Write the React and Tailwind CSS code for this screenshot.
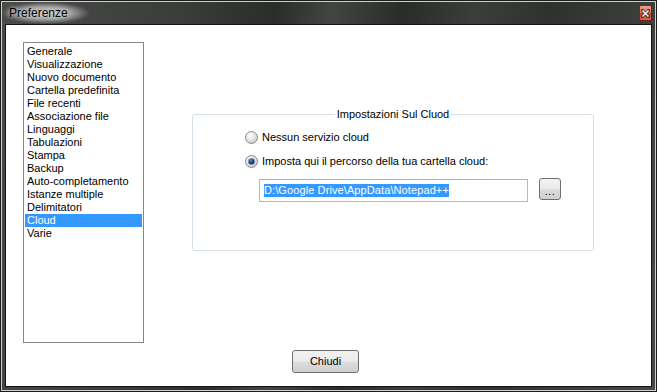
import React from 'react';

const items = [
  'Generale',
  'Visualizzazione',
  'Nuovo documento',
  'Cartella predefinita',
  'File recenti',
  'Associazione file',
  'Linguaggi',
  'Tabulazioni',
  'Stampa',
  'Backup',
  'Auto-completamento',
  'Istanze multiple',
  'Delimitatori',
  'Cloud',
  'Varie',
];

const Radio = ({ checked }) => (
  <svg width="13" height="13" viewBox="0 0 13 13" className="shrink-0">
    <defs>
      <radialGradient id={checked ? 'rgc' : 'rgu'} cx="40%" cy="35%" r="70%">
        <stop offset="0%" stopColor="#ffffff" />
        <stop offset="60%" stopColor="#e2e2e2" />
        <stop offset="100%" stopColor="#c4c4c4" />
      </radialGradient>
      <radialGradient id="dot" cx="40%" cy="35%" r="70%">
        <stop offset="0%" stopColor="#6a8fc0" />
        <stop offset="55%" stopColor="#1d3f6e" />
        <stop offset="100%" stopColor="#0e2344" />
      </radialGradient>
    </defs>
    <circle cx="6.5" cy="6.5" r="6" fill={`url(#${checked ? 'rgc' : 'rgu'})`} stroke="#8a8a8a" />
    {checked && <circle cx="6.5" cy="6.5" r="3.3" fill="url(#dot)" stroke="#9fc0e4" strokeWidth="0.6" />}
  </svg>
);

export default function App() {
  return (
    <div className="w-[657px] h-[392px] border border-[#1c1c1c] bg-[#3d3f3d] font-['Liberation_Sans',Arial,sans-serif] text-[11px] text-black">
      <div className="h-full border border-[#cfcfcf] flex flex-col px-[3px] pb-[3px] bg-[linear-gradient(100deg,#4a4c4a_0%,#3b3d3b_25%,#2b2d2b_38%,#434543_46%,#2a2c2a_56%,#3c3e3c_66%,#2f312f_76%,#474947_100%)]">
        {/* title bar */}
        <div className="h-[22px] flex items-start justify-between">
          <div className="h-full flex items-center -ml-[3px] pl-[7px] pr-[22px] bg-[radial-gradient(closest-side,rgba(205,205,205,0.95)_0%,rgba(185,185,185,0.8)_55%,rgba(150,150,150,0)_100%)]">
            <span className="text-[12px] text-black leading-none [text-shadow:0_0_4px_#e8e8e8]">Preferenze</span>
          </div>
          <div className="mt-[3px] w-[13px] h-[16px] rounded-[2px] border border-[#7a2416] bg-[linear-gradient(180deg,#f0a08c_0%,#e06a50_45%,#c4391f_55%,#d8644a_100%)] flex items-center justify-center">
            <svg width="9" height="9" viewBox="0 0 9 9">
              <path d="M1.5 1.5 L7.5 7.5 M7.5 1.5 L1.5 7.5" stroke="#3a3a3a" strokeWidth="3" strokeLinecap="square" />
              <path d="M1.5 1.5 L7.5 7.5 M7.5 1.5 L1.5 7.5" stroke="#ffffff" strokeWidth="1.4" />
            </svg>
          </div>
        </div>

        {/* client area */}
        <div className="flex-1 bg-white border border-[#141414] flex flex-col">
          <div className="flex pl-[17px] pt-[17px]">
            <div className="w-[121px] h-[301px] border border-[#828790] px-px pt-[2px]">
              {items.map((it) => (
                <div
                  key={it}
                  className={`h-[13px] leading-[13px] pl-[2px] whitespace-nowrap ${it === 'Cloud' ? 'bg-[#3399ff] text-white' : ''}`}
                >
                  {it}
                </div>
              ))}
            </div>

            <div className="relative ml-[48px] mt-[72px] w-[402px] h-[137px] border border-[#d5dfe5] rounded-[3px]">
              <div className="absolute -top-[7px] left-0 right-0 flex justify-center">
                <span className="bg-white px-[2px] leading-[13px]">Impostazioni Sul Cluod</span>
              </div>
              <div className="pl-[52px] pt-[16px] flex flex-col">
                <div className="flex items-center gap-[4px] h-[13px]">
                  <Radio checked={false} />
                  <span className="leading-[13px]">Nessun servizio cloud</span>
                </div>
                <div className="flex items-center gap-[4px] h-[13px] mt-[11px]">
                  <Radio checked />
                  <span className="leading-[13px]">Imposta qui il percorso della tua cartella cloud:</span>
                </div>
                <div className="flex items-start ml-[14px] mt-[11px]">
                  <div className="w-[269px] h-[23px] border border-[#abbccd] border-t-[#9fb4c8] flex items-center pl-[4px]">
                    <span className="bg-[#3399ff] text-white leading-[13px] whitespace-nowrap tracking-[0.1px]">D:\Google Drive\AppData\Notepad++</span>
                  </div>
                  <div className="ml-[11px] -mt-px w-[22px] h-[22px] rounded-[3px] border border-[#707070] bg-[linear-gradient(180deg,#f2f2f2_0%,#ebebeb_48%,#dddddd_52%,#cfcfcf_100%)] flex items-end justify-center pb-[3px]">
                    <span className="leading-[10px] tracking-[0.5px]">...</span>
                  </div>
                </div>
              </div>
            </div>
          </div>

          <div className="pl-[286px] pt-[7px]">
            <div className="w-[67px] h-[23px] rounded-[3px] border border-[#707070] bg-[linear-gradient(180deg,#f2f2f2_0%,#ebebeb_48%,#dddddd_52%,#cfcfcf_100%)] flex items-center justify-center">
              <span className="leading-[13px]">Chiudi</span>
            </div>
          </div>
        </div>
      </div>
    </div>
  );
}
